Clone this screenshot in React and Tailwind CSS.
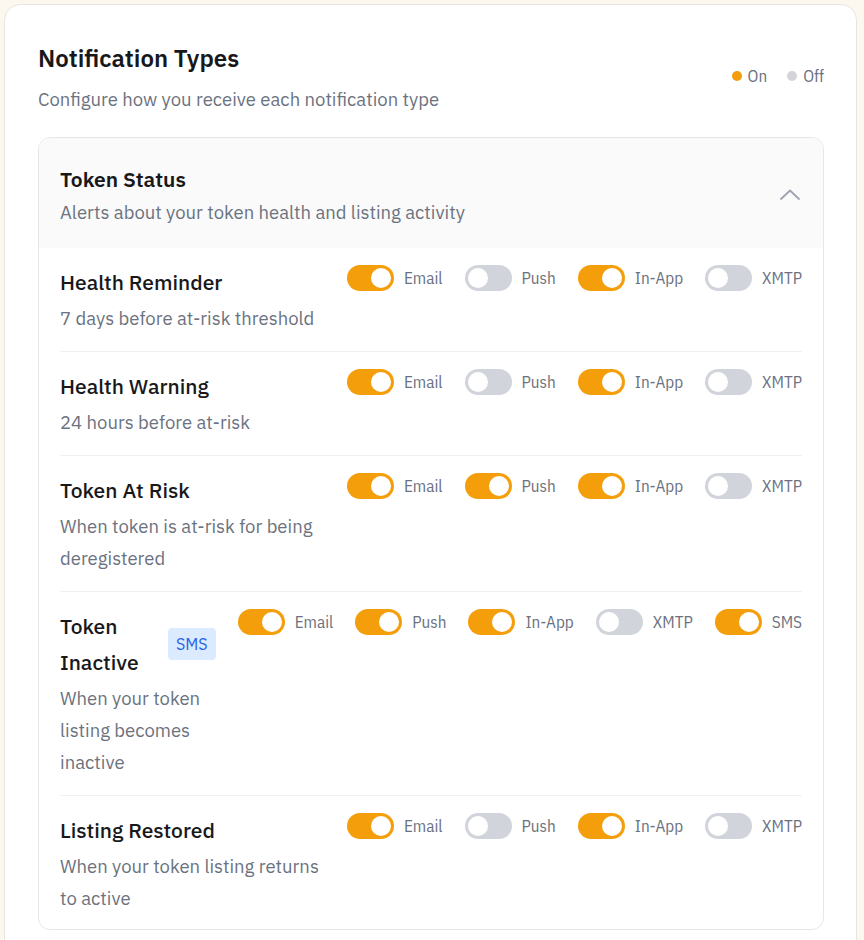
import React from "react";

const ROWS = [
  { title: "Health Reminder", desc: "7 days before at-risk threshold", ch: [["Email", true], ["Push", false], ["In-App", true], ["XMTP", false]] },
  { title: "Health Warning", desc: "24 hours before at-risk", ch: [["Email", true], ["Push", false], ["In-App", true], ["XMTP", false]] },
  { title: "Token At Risk", desc: "When token is at-risk for being deregistered", ch: [["Email", true], ["Push", true], ["In-App", true], ["XMTP", false]] },
  { title: "Token Inactive", badge: "SMS", desc: "When your token listing becomes inactive", ch: [["Email", true], ["Push", true], ["In-App", true], ["XMTP", false], ["SMS", true]] },
  { title: "Listing Restored", desc: "When your token listing returns to active", ch: [["Email", true], ["Push", false], ["In-App", true], ["XMTP", false]] },
];

const COND = { fontFamily: '"IBM Plex Sans Condensed", "IBM Plex Sans", "Noto Sans", sans-serif' };

function Toggle({ on }) {
  return (
    <span className={`relative block w-[47px] h-[26px] rounded-full shrink-0 ${on ? "bg-[#f59e0b]" : "bg-[#d1d5db]"}`}>
      <span className={`absolute top-[3px] size-5 rounded-full bg-white ${on ? "right-[3px]" : "left-[3px]"}`} />
    </span>
  );
}

export default function App() {
  return (
    <div className="min-h-[940px] bg-[#fdf8ef] pt-1 pl-1 pr-[7px] text-[#111827]" style={{ fontFamily: '"IBM Plex Sans", "Noto Sans", sans-serif' }}>
      <div className="bg-white border border-[#e9e6e0] rounded-2xl pl-[33px] pr-[32px] pt-[33px] pb-10">
        <div className="flex justify-between items-start">
          <div>
            <h2 className="text-[24px] leading-[40px] font-semibold text-[#18181b]">Notification Types</h2>
            <p className="mt-[5px] text-[18.5px] leading-8 text-[#6b7280]">Configure how you receive each notification type</p>
          </div>
          <div className="mt-[26px] flex items-center gap-5 text-[17px] leading-6 text-[#6b7280]" style={COND}>
            <span className="flex items-center gap-1.5"><span className="size-2.5 rounded-full bg-[#f59e0b]" />On</span>
            <span className="flex items-center gap-1.5"><span className="size-2.5 rounded-full bg-[#d4d4d8]" />Off</span>
          </div>
        </div>
        <div className="mt-[22px] border border-[#e5e7eb] rounded-xl overflow-hidden">
          <div className="bg-[#fafafa] px-[21px] pt-6 pb-5 flex justify-between items-center">
            <div>
              <div className="text-[21px] leading-[34px] font-semibold text-[#18181b]">Token Status</div>
              <div className="text-[18.5px] leading-8 text-[#6b7280]">Alerts about your token health and listing activity</div>
            </div>
            <svg width="20" height="11" viewBox="0 0 20 11" fill="none" className="mr-[2px] -mt-[2px]">
              <polyline points="1,10 10,1.5 19,10" stroke="#9ca3af" strokeWidth="1.8" strokeLinecap="round" strokeLinejoin="round" />
            </svg>
          </div>
          <div className="px-[21px]">
            {ROWS.map((r, i) => (
              <div key={r.title} className={`flex items-start gap-[22px] pt-4 ${i < ROWS.length - 1 ? "pb-[17px] border-b border-[#f0f0f0]" : "pb-[15px]"}`}>
                <div className="flex-1 min-w-0">
                  <div className="flex items-center gap-2">
                    <div className="text-[21px] leading-9 font-medium text-[#18181b]">{r.title}</div>
                    {r.badge && (
                      <span className="shrink-0 bg-[#dbeafe] text-[#2563eb] text-[16px] leading-8 px-2 rounded">{r.badge}</span>
                    )}
                  </div>
                  <div className="mt-0.5 text-[18.5px] leading-8 text-[#6b7280]">{r.desc}</div>
                </div>
                <div className="flex gap-[22px] shrink-0 pt-px">
                  {r.ch.map(([label, on]) => (
                    <div key={label} className="flex items-center gap-2.5">
                      <Toggle on={on} />
                      <span className="text-[17px] leading-[26px] text-[#6b7280]" style={COND}>{label}</span>
                    </div>
                  ))}
                </div>
              </div>
            ))}
          </div>
        </div>
      </div>
    </div>
  );
}
